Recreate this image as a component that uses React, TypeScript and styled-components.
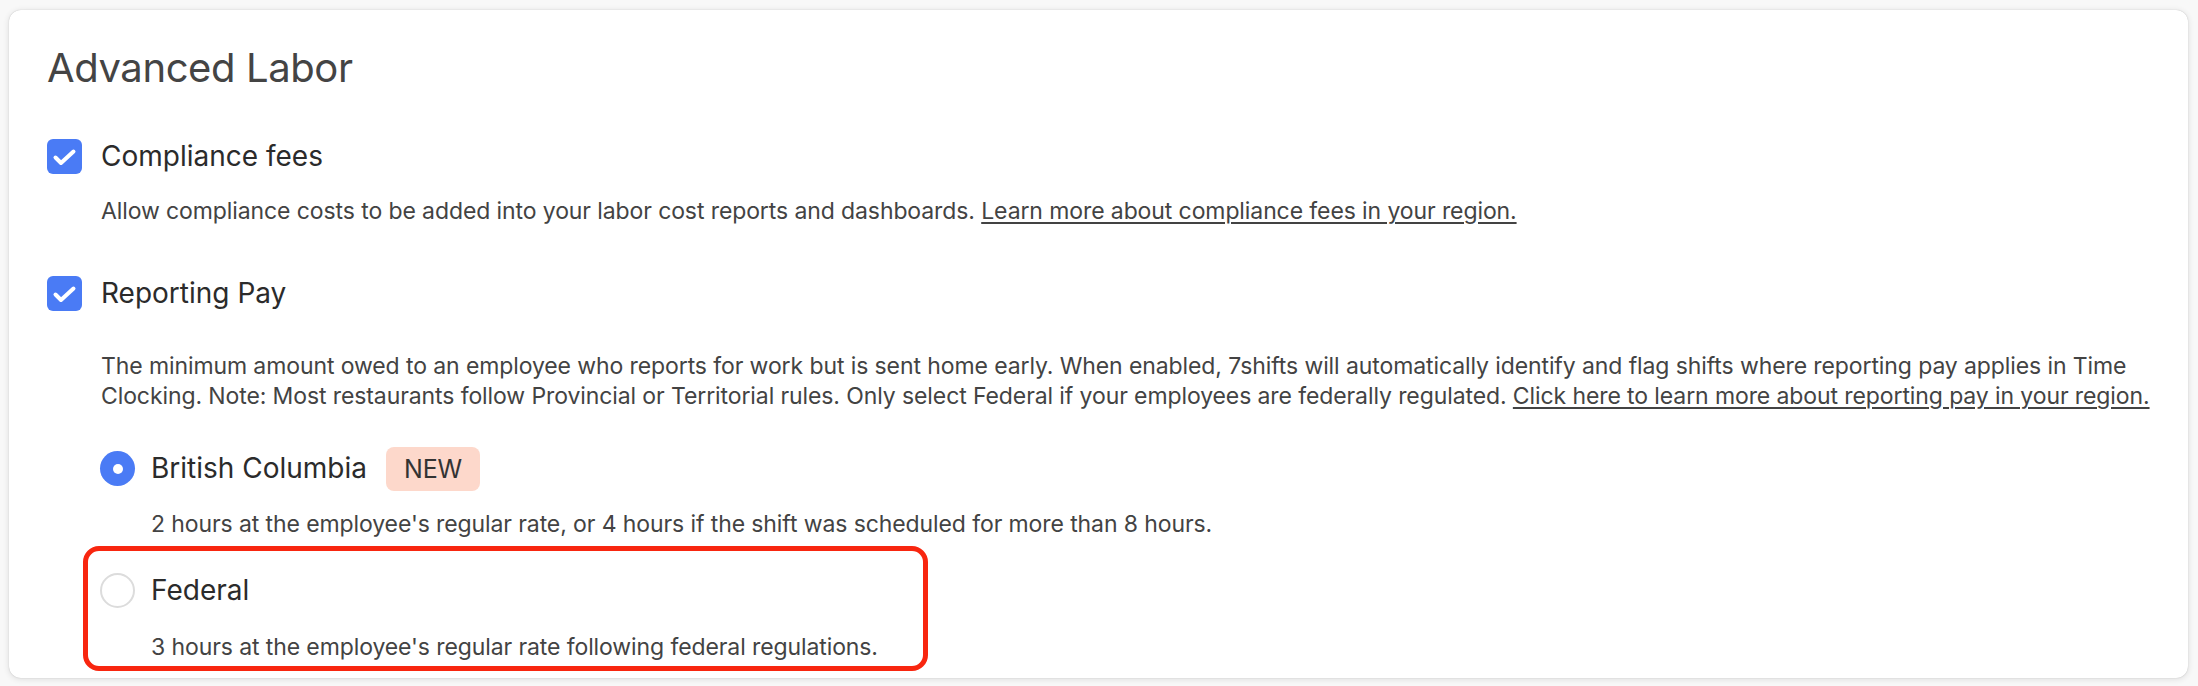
import React from "react";
import styled, { createGlobalStyle } from "styled-components";

const GlobalStyle = createGlobalStyle`
  html, body {
    margin: 0;
    padding: 0;
    background: #f8f8f8;
  }
  body {
    font-family: Inter, "Noto Sans", "Liberation Sans", sans-serif;
    -webkit-font-smoothing: antialiased;
  }
  * { box-sizing: border-box; }
`;

const Page = styled.div`
  padding: 10px 10px 10px 9px;
`;

const Card = styled.section`
  background: #ffffff;
  border-radius: 12px;
  box-shadow: 0 0 1px rgba(0, 0, 0, 0.25), 0 1px 6px rgba(0, 0, 0, 0.12);
  padding: 34px 18px 7px 38px;
`;

const Title = styled.h1`
  margin: 0;
  font-size: 40px;
  line-height: 48px;
  font-weight: 400;
  color: #444444;
  letter-spacing: -0.4px;
`;

const Section = styled.div<{ $gap: number }>`
  margin-top: ${(p) => p.$gap}px;
`;

const OptionRow = styled.div`
  display: flex;
  align-items: center;
  height: 35px;
  gap: 19px;
`;

const CheckBox = styled.span`
  display: inline-flex;
  align-items: center;
  justify-content: center;
  width: 35px;
  height: 35px;
  border-radius: 6px;
  background: #4a7bf5;
  flex: none;
`;

const Label = styled.span`
  font-size: 28px;
  line-height: 35px;
  color: #2b2b2b;
  letter-spacing: 0;
`;

const Description = styled.p<{ $indent: number; $gap: number }>`
  margin: ${(p) => p.$gap}px 0 0;
  padding-left: ${(p) => p.$indent}px;
  font-size: 23px;
  line-height: 30.5px;
  color: #434343;
  letter-spacing: -0.1px;
`;

const Link = styled.a`
  color: inherit;
  text-decoration: underline;
  text-underline-offset: 3px;
  text-decoration-thickness: 1.5px;
`;

const RadioGroup = styled.div`
  margin-top: 35px;
  padding-left: 53px;
`;

const RadioOption = styled.div<{ $highlighted?: boolean; $gap: number }>`
  margin-top: ${(p) => p.$gap}px;
  ${(p) =>
    p.$highlighted
      ? `
    margin-left: -17px;
    width: 845px;
    border: 5px solid #f8260f;
    border-radius: 16px;
    padding: 22px 0 3px 12px;
  `
      : ""}
`;

const RadioRow = styled.div<{ $height: number }>`
  display: flex;
  align-items: center;
  height: ${(p) => p.$height}px;
  gap: 16px;
`;

const Radio = styled.span<{ $checked?: boolean }>`
  display: inline-flex;
  align-items: center;
  justify-content: center;
  width: 35px;
  height: 35px;
  border-radius: 50%;
  flex: none;
  background: ${(p) => (p.$checked ? "#4a7bf5" : "#ffffff")};
  border: ${(p) => (p.$checked ? "none" : "2px solid #dcdcdc")};

  &::after {
    content: "";
    display: ${(p) => (p.$checked ? "block" : "none")};
    width: 10px;
    height: 10px;
    border-radius: 50%;
    background: #ffffff;
  }
`;

const Badge = styled.span`
  display: inline-flex;
  align-items: center;
  height: 44px;
  padding: 0 18px;
  margin-left: 3px;
  border-radius: 8px;
  background: #fdd8cb;
  color: #333333;
  font-size: 25px;
  letter-spacing: -0.2px;
`;

const CheckIcon = () => (
  <svg width="35" height="35" viewBox="0 0 35 35" fill="none">
    <path
      d="M8.5 18.5 L14 24 L26.5 12.5"
      stroke="#ffffff"
      strokeWidth="4"
      strokeLinecap="round"
      strokeLinejoin="round"
    />
  </svg>
);

export default function App() {
  return (
    <>
      <GlobalStyle />
      <Page>
        <Card>
          <Title>Advanced Labor</Title>

          <Section $gap={47}>
            <OptionRow>
              <CheckBox>
                <CheckIcon />
              </CheckBox>
              <Label>Compliance fees</Label>
            </OptionRow>
            <Description $indent={54} $gap={22}>
              Allow compliance costs to be added into your labor cost reports and dashboards.{" "}
              <Link href="#">Learn more about compliance fees in your region.</Link>
            </Description>
          </Section>

          <Section $gap={49}>
            <OptionRow>
              <CheckBox>
                <CheckIcon />
              </CheckBox>
              <Label>Reporting Pay</Label>
            </OptionRow>
            <Description $indent={54} $gap={40}>
              The minimum amount owed to an employee who reports for work but is sent home early. When
              enabled, 7shifts will automatically identify and flag shifts where reporting pay applies in
              Time Clocking. Note: Most restaurants follow Provincial or Territorial rules. Only select
              Federal if your employees are federally regulated.{" "}
              <Link href="#">Click here to learn more about reporting pay in your region.</Link>
            </Description>

            <RadioGroup>
              <RadioOption $gap={0}>
                <RadioRow $height={44}>
                  <Radio $checked />
                  <Label>British Columbia</Label>
                  <Badge>NEW</Badge>
                </RadioRow>
                <Description $indent={51} $gap={18}>
                  2 hours at the employee's regular rate, or 4 hours if the shift was scheduled for more
                  than 8 hours.
                </Description>
              </RadioOption>

              <RadioOption $highlighted $gap={7}>
                <RadioRow $height={35}>
                  <Radio />
                  <Label>Federal</Label>
                </RadioRow>
                <Description $indent={51} $gap={24}>
                  3 hours at the employee's regular rate following federal regulations.
                </Description>
              </RadioOption>
            </RadioGroup>
          </Section>
        </Card>
      </Page>
    </>
  );
}
